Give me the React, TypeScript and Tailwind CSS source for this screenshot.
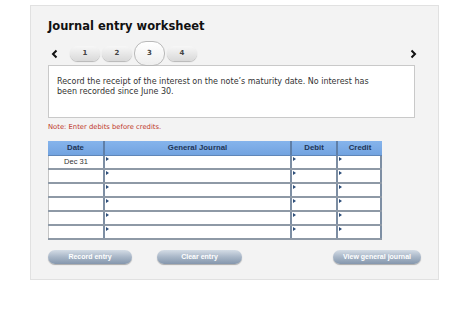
import React from "react";

const verdana = { fontFamily: '"DejaVu Sans", Verdana, sans-serif' };
const arial = { fontFamily: '"Liberation Sans", Arial, sans-serif' };

function Marker() {
  return (
    <span className="absolute left-[1px] top-[1px] h-0 w-0 border-y-[2px] border-l-[3px] border-y-transparent border-l-[#2d4e7a]" />
  );
}

function InputCell({ className }: { className: string }) {
  return (
    <div className={`relative h-full border-l-2 border-[#7d8ea3] bg-white ${className}`}>
      <Marker />
    </div>
  );
}

function Row({ date }: { date?: string }) {
  return (
    <div className="flex h-[14px] border-b-2 border-[#8e99a6]">
      <div
        className="flex w-[55px] items-center justify-center border-l border-[#c5c5c5] bg-white text-[7.5px] text-[#333]"
        style={arial}
      >
        {date}
      </div>
      <InputCell className="w-[187px]" />
      <InputCell className="w-[46px]" />
      <div className="relative h-full w-[46px] border-x-2 border-[#7d8ea3] bg-white">
        <Marker />
      </div>
    </div>
  );
}

function Tab({ n }: { n: number }) {
  return (
    <div className="flex h-[15px] w-[30px] items-center justify-center rounded-full bg-gradient-to-b from-[#f7f7f7] to-[#d9d9d9] text-[7px] font-bold text-[#444] shadow-[0_1px_1px_rgba(0,0,0,0.25)]">
      {n}
    </div>
  );
}

function Chevron({ dir }: { dir: "left" | "right" }) {
  return (
    <svg width="7" height="10" viewBox="0 0 7 10">
      <path
        d={dir === "left" ? "M5.5 1.5 L2 5 L5.5 8.5" : "M1.5 1.5 L5 5 L1.5 8.5"}
        fill="none"
        stroke="#111"
        strokeWidth="2"
      />
    </svg>
  );
}

function Btn({ label, className }: { label: string; className: string }) {
  return (
    <div
      className={`flex h-[14px] items-center justify-center rounded-full bg-gradient-to-b from-[#d4dce6] via-[#a8b6c7] to-[#8597ad] text-[7px] font-bold text-white shadow-[0_1px_1px_rgba(0,0,0,0.3)] ${className}`}
      style={arial}
    >
      {label}
    </div>
  );
}

export default function App() {
  return (
    <div className="h-[314px] w-[474px] bg-white pt-[5px]" style={verdana}>
      <div className="ml-[30px] h-[275px] w-[409px] border border-[#e1e1e1] bg-[#f3f3f3] pl-[17px]">
        <h1 className="mt-[12px] text-[11.5px] font-bold leading-[16px] text-[#111]">
          Journal entry worksheet
        </h1>

        <div className="mt-[7px] flex h-[25px] items-center">
          <span className="ml-[3px] flex w-[19px]">
            <Chevron dir="left" />
          </span>
          <div className="flex items-center gap-[2px]">
            <Tab n={1} />
            <Tab n={2} />
            <div className="z-10 flex h-[25px] w-[31px] items-center justify-center rounded-[12px] border border-[#b9b9b9] bg-gradient-to-b from-white to-[#eeeeee] text-[7px] font-bold text-[#444]">
              3
            </div>
            <Tab n={4} />
          </div>
          <span className="ml-auto mr-[21px] flex">
            <Chevron dir="right" />
          </span>
        </div>

        <div className="-mt-[1px] h-[53px] w-[367px] border border-[#c9c9c9] bg-white px-[8px] pt-[11px] text-[8px] leading-[10px] text-[#333]">
          Record the receipt of the interest on the note’s maturity date. No interest has
          <br />
          been recorded since June 30.
        </div>

        <p className="mt-[5px] text-[6.8px] leading-[9px] text-[#c0392b]">
          Note: Enter debits before credits.
        </p>

        <div className="mt-[9px] w-[334px]">
          <div
            className="flex h-[15px] border-b border-[#5f86b8] bg-gradient-to-b from-[#86b4ec] to-[#72a3e0] text-[7.8px] font-bold text-[#1d3557]"
            style={arial}
          >
            <div className="flex w-[55px] items-center justify-center">Date</div>
            <div className="flex w-[187px] items-center justify-center border-l-2 border-[#5f7fa8]">
              General Journal
            </div>
            <div className="flex w-[46px] items-center justify-center border-l-2 border-[#5f7fa8]">
              Debit
            </div>
            <div className="flex w-[46px] items-center justify-center border-l-2 border-[#5f7fa8]">
              Credit
            </div>
          </div>
          <Row date="Dec 31" />
          <Row />
          <Row />
          <Row />
          <Row />
          <Row />
        </div>

        <div className="mt-[10px] flex w-[373px] items-center">
          <Btn label="Record entry" className="w-[84px]" />
          <Btn label="Clear entry" className="ml-[25px] w-[85px]" />
          <Btn label="View general journal" className="ml-auto w-[88px]" />
        </div>
      </div>
    </div>
  );
}
